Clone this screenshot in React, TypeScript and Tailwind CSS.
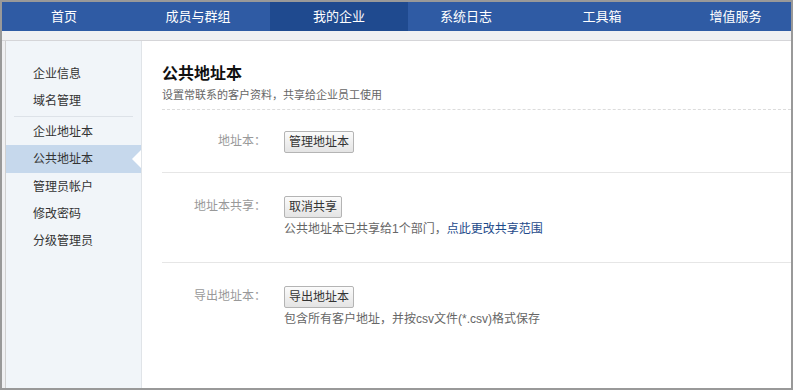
import React from 'react';

const font = { fontFamily: '"Liberation Sans", "Noto Sans CJK SC", sans-serif' };

const navItems = [
  { label: '首页', w: 'w-[124px]' },
  { label: '成员与群组', w: 'w-[144px]' },
  { label: '我的企业', w: 'w-[138px]', active: true },
  { label: '系统日志', w: 'w-[116px]' },
  { label: '工具箱', w: 'w-[156px]' },
  { label: '增值服务', w: 'flex-1' },
];

const sideGroups = [
  ['企业信息', '域名管理'],
  ['企业地址本', '公共地址本', '管理员帐户', '修改密码', '分级管理员'],
];

const Btn: React.FC<{ children: React.ReactNode }> = ({ children }) => (
  <button className="h-[22px] px-[4px] rounded-[2px] border border-[#b4b4b4] bg-gradient-to-b from-[#fbfbfb] to-[#e4e4e4] text-[12px] text-[#333] leading-[20px]">
    {children}
  </button>
);

export default function App() {
  return (
    <div style={font} className="w-[793px] h-[390px] bg-[#999] pt-[2px] pl-[2px] pr-[2px] pb-[2px] overflow-hidden">
      <div className="h-full bg-[#f0f0f2] flex flex-col">
        {/* top nav */}
        <div className="h-[29px] bg-[#2f5ba4] flex text-white text-[13px]">
          {navItems.map(n => (
            <div
              key={n.label}
              className={`${n.w} flex items-center justify-center ${n.active ? 'bg-[#1f4a8f]' : ''}`}
            >
              {n.label}
            </div>
          ))}
        </div>
        <div className="h-[10px] border-b border-[#d5d5d8]" />

        <div className="flex-1 flex pl-[3px]">
          <div className="flex-1 flex border-l border-[#d0d0d0] bg-white">
            {/* sidebar */}
            <div className="w-[136px] bg-[#f1f5f9] border-r border-[#e0e4e8] pt-[19px]">
              {sideGroups.map((g, gi) => (
                <div key={gi} className={gi === 0 ? 'border-b border-[#dde2e8] mx-[8px] pb-[2px]' : 'pt-[1px]'}>
                  {g.map(item => {
                    const active = item === '公共地址本';
                    return (
                      <div
                        key={item}
                        className={`relative h-[27px] flex items-center text-[12px] text-[#333] ${
                          gi === 0 ? 'pl-[19px]' : 'pl-[27px]'
                        } ${active ? 'bg-[#c6d8ec] h-[28px]' : ''}`}
                      >
                        {item}
                        {active && (
                          <span className="absolute right-0 top-1/2 -translate-y-1/2 w-0 h-0 border-y-[9px] border-y-transparent border-r-[9px] border-r-white" />
                        )}
                      </div>
                    );
                  })}
                </div>
              ))}
            </div>

            {/* main */}
            <div className="flex-1 pl-[20px] pt-[22px]">
              <h1 className="text-[16px] font-bold text-[#111] leading-[22px]">公共地址本</h1>
              <p className="text-[11px] text-[#666] mt-[2px] leading-[16px]">设置常联系的客户资料，共享给企业员工使用</p>
              <div className="mt-[6px] border-t border-dashed border-[#dcdcdc]" />

              <div className="h-[63px] border-b border-[#e6e6e6] flex items-center">
                <div className="w-[104px] text-right text-[12px] text-[#999]">地址本：</div>
                <div className="pl-[18px]">
                  <Btn>管理地址本</Btn>
                </div>
              </div>

              <div className="h-[90px] border-b border-[#e6e6e6] pt-[21px] flex">
                <div className="w-[104px] text-right text-[12px] text-[#999] leading-[24px]">地址本共享：</div>
                <div className="pl-[18px]">
                  <Btn>取消共享</Btn>
                  <p className="text-[12px] text-[#666] mt-[2px]">
                    公共地址本已共享给1个部门，<span className="text-[#1d4a8a]">点此更改共享范围</span>
                  </p>
                </div>
              </div>

              <div className="pt-[21px] flex">
                <div className="w-[104px] text-right text-[12px] text-[#999] leading-[24px]">导出地址本：</div>
                <div className="pl-[18px]">
                  <Btn>导出地址本</Btn>
                  <p className="text-[12px] text-[#666] mt-[2px]">包含所有客户地址，并按csv文件(*.csv)格式保存</p>
                </div>
              </div>
            </div>
          </div>
        </div>
      </div>
    </div>
  );
}
